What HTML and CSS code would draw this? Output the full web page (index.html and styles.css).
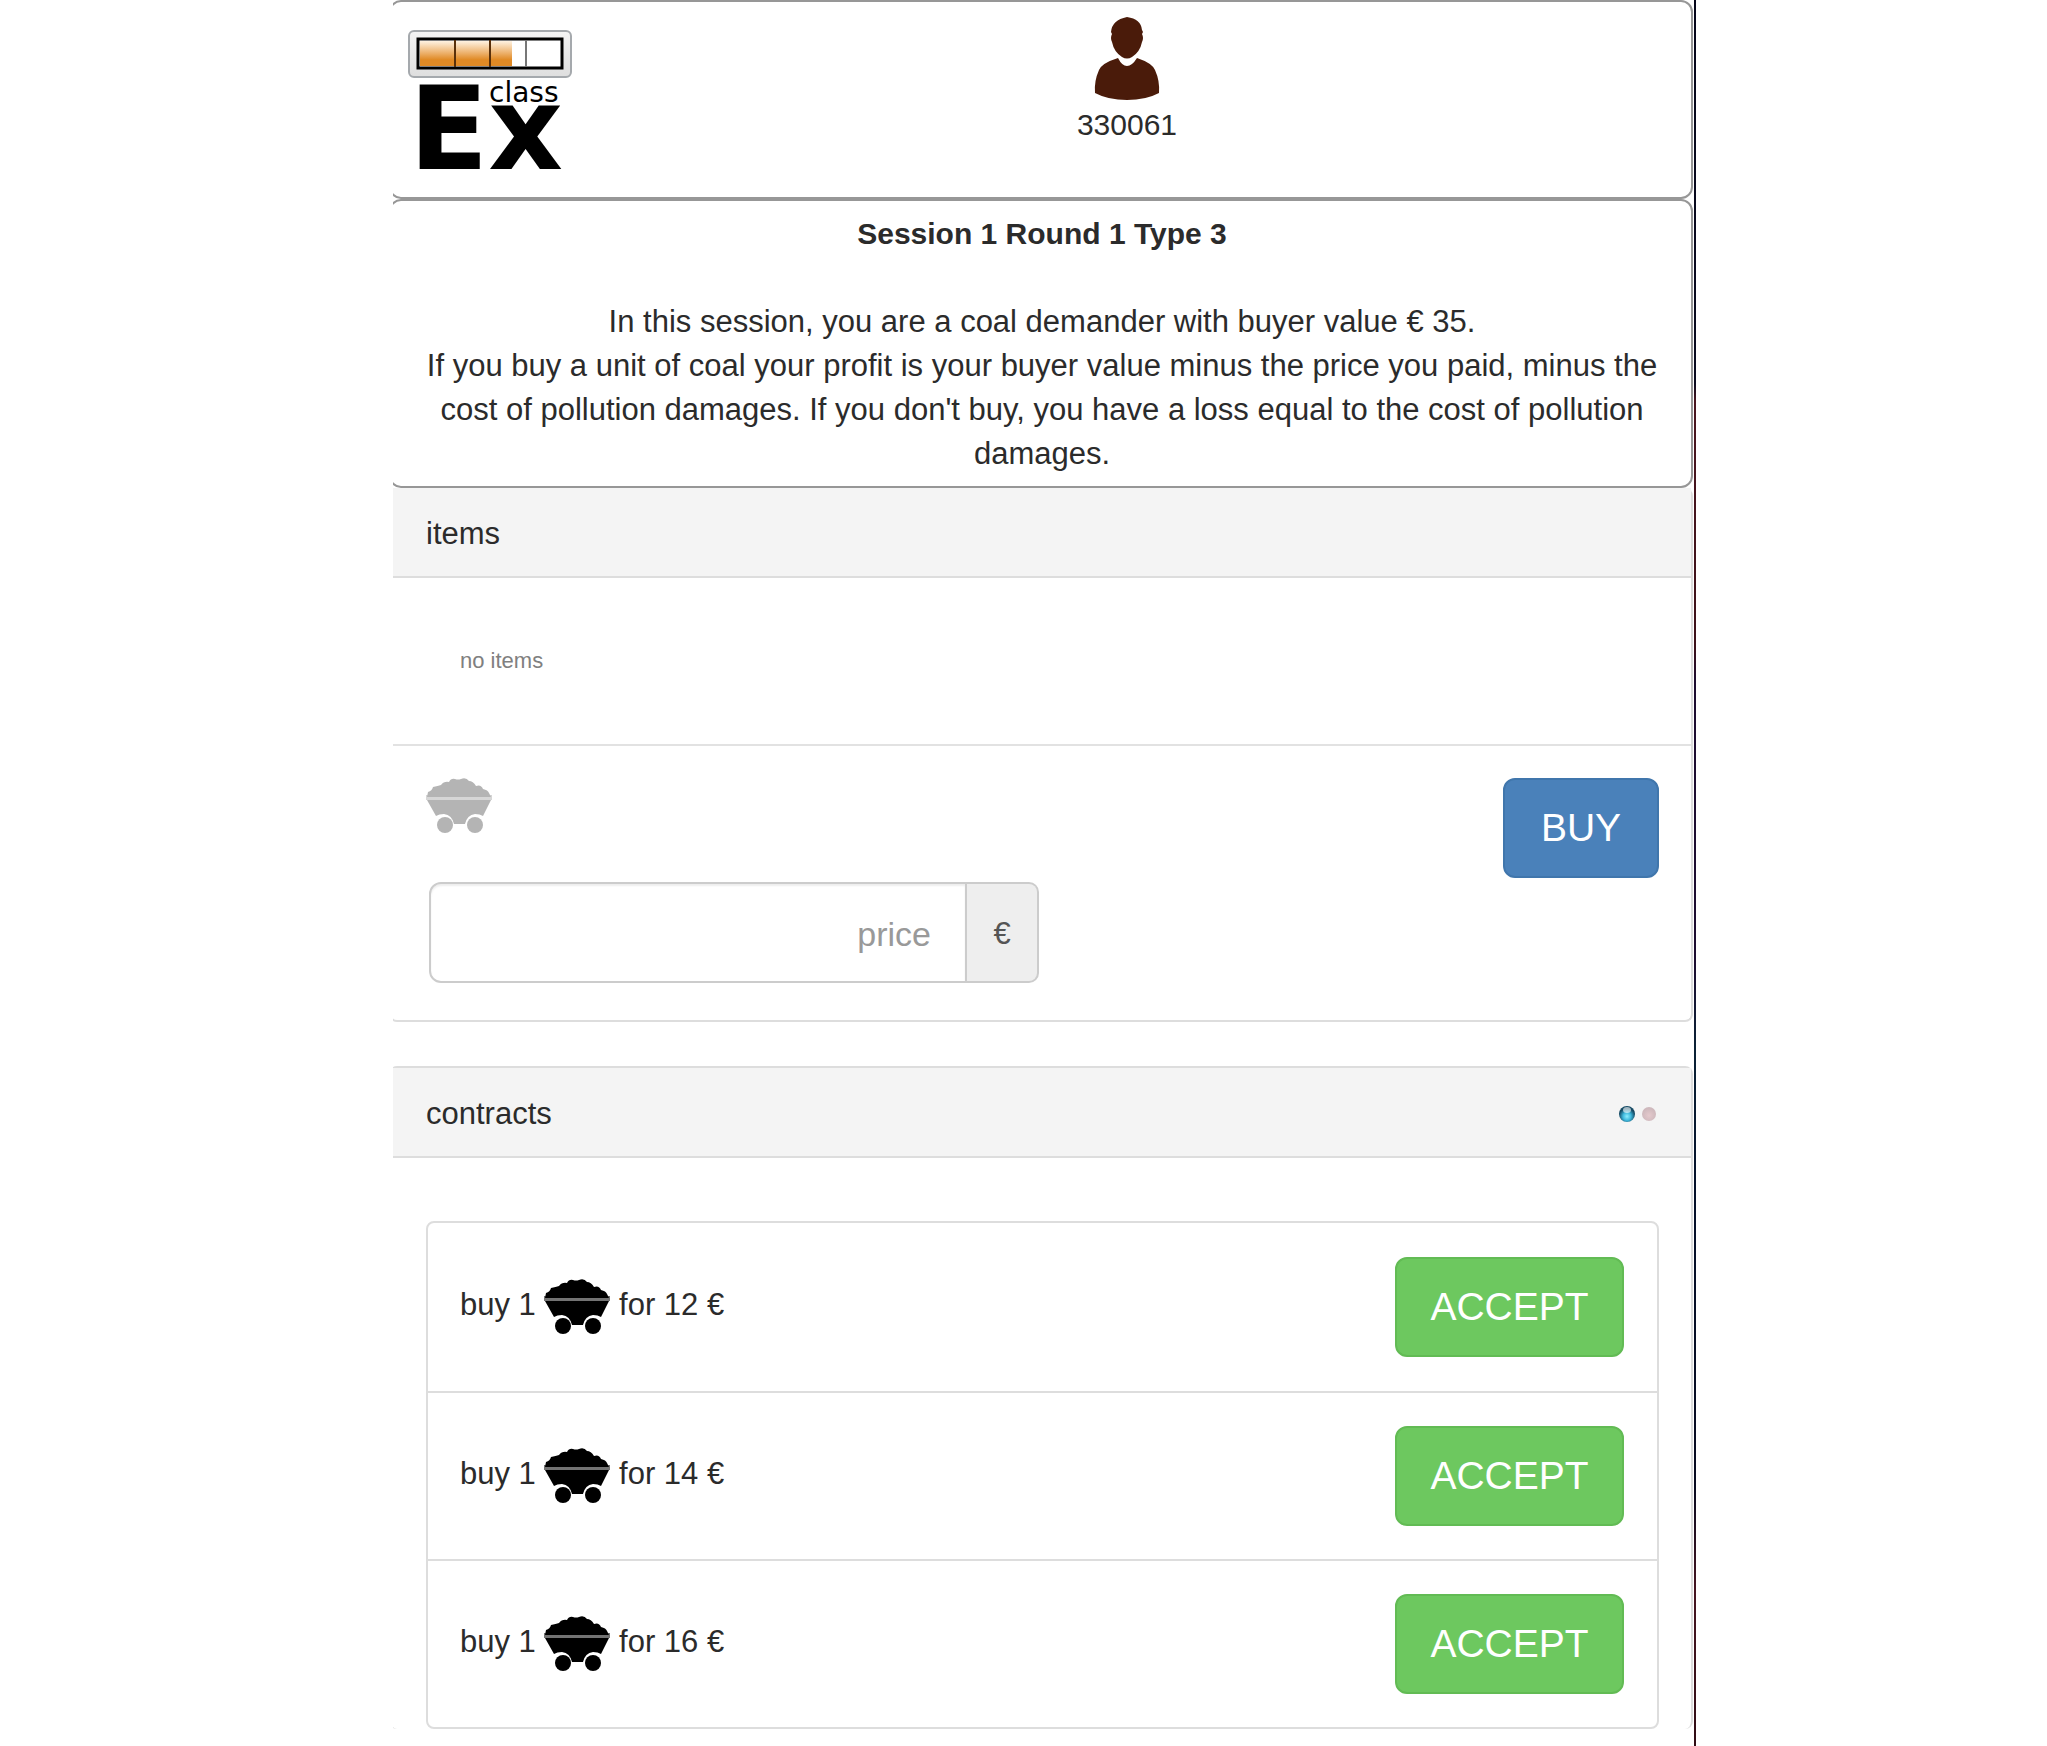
FILE: index.html
```html
<!DOCTYPE html>
<html lang="en">
<head>
<meta charset="utf-8">
<meta name="viewport" content="width=device-width, initial-scale=1">
<title>classEx</title>
<link rel="stylesheet" href="styles.css">
</head>
<body>
<svg class="defs" aria-hidden="true">
  <symbol id="cart" viewBox="0 0 66 56">
    <path d="M1 19 2 14Q6 13 7 9Q12 8 15 7Q18 3 23 4Q25 0 29 1Q32 2 35 1Q40-1 43 3Q47 3 50 8Q55 6 57 11Q62 12 63 15L65 19Z"/>
    <path d="M0 17H66V22H0Z" opacity=".55"/>
    <path d="M1 22H65L57 38Q54 36 49 36Q41 37 39 46H28Q26 37 18 36Q13 36 10 38Z"/>
    <circle cx="19" cy="47" r="8"/><circle cx="49" cy="47" r="8"/>
  </symbol>
</svg>
<main class="app">
  <header class="box top">
    <svg class="logo" viewBox="0 0 166 166" role="img" aria-label="classEx">
      <defs>
        <linearGradient id="frame" x2="0" y2="1"><stop offset="0" stop-color="#f4f4f4"/><stop offset="1" stop-color="#dedede"/></linearGradient>
        <linearGradient id="charge" x2="0" y2="1"><stop offset="0" stop-color="#fff3e2"/><stop offset=".5" stop-color="#ecae66"/><stop offset=".75" stop-color="#e08a25"/><stop offset="1" stop-color="#e08a25"/></linearGradient>
      </defs>
      <rect x="1" y="1" width="162" height="46" rx="5" fill="url(#frame)" stroke="#a5a9ad" stroke-width="2"/>
      <rect x="10" y="9" width="144" height="29" fill="#fff" stroke="#000" stroke-width="3"/>
      <path d="M12 11H104V36H12Z" fill="url(#charge)"/>
      <path d="M47 10V37M82 10V37" stroke="#59300a" stroke-width="2"/>
      <path d="M118 10V37" stroke="#777" stroke-width="2"/>
      <text class="logo-ex" x="1" y="139">Ex</text>
      <text class="logo-class" x="81" y="72">class</text>
    </svg>
    <div class="user">
      <svg class="avatar" viewBox="0 0 66 84" aria-hidden="true">
        <path fill="#4a1b0a" d="M33 0Q47 2 48 13L49 15 48 17Q50 21 48 25Q46 35 38 40Q33 43 28 40Q20 35 18 25Q16 21 18 17L17 15Q18 3 33 0ZM24 41Q28 49 33 49Q38 49 43 41Q58 46 61 53Q66 64 65 76Q52 83 33 83Q14 83 1 76Q0 64 5 53Q8 46 24 41Z"/>
      </svg>
      <div>330061</div>
    </div>
  </header>
  <section class="box intro">
    <h1>Session 1 Round 1 Type 3</h1>
    <p>In this session, you are a coal demander with buyer value € 35.<br>If you buy a unit of coal your profit is your buyer value minus the price you paid, minus the cost of pollution damages. If you don't buy, you have a loss equal to the cost of pollution damages.</p>
  </section>
  <section class="panel">
    <h2 class="heading">items</h2>
    <p class="empty">no items</p>
    <form class="offer">
      <div>
        <svg class="cart cart-muted" aria-hidden="true"><use href="#cart"/></svg>
        <div class="price-group">
          <input class="price" type="text" placeholder="price" aria-label="price">
          <span class="unit">€</span>
        </div>
      </div>
      <button class="btn buy" type="button">BUY</button>
    </form>
  </section>
  <section class="panel contracts">
    <h2 class="heading">contracts
      <svg class="lights" viewBox="0 0 38 16" aria-hidden="true">
        <defs>
          <radialGradient id="on" cy=".65"><stop offset="0" stop-color="#8deeff"/><stop offset=".5" stop-color="#3fb8dc"/><stop offset="1" stop-color="#154a64"/></radialGradient>
          <radialGradient id="off" cy=".6"><stop offset="0" stop-color="#e4c9cc"/><stop offset="1" stop-color="#cfb9bd"/></radialGradient>
        </defs>
        <circle cx="8" cy="8" r="8" fill="url(#on)"/><ellipse cx="8" cy="4" rx="4" ry="3" fill="#fff" opacity=".6"/>
        <circle cx="30" cy="8" r="7" fill="url(#off)"/>
      </svg>
    </h2>
    <ul class="list">
      <li><span class="deal">buy 1 <svg class="cart" role="img" aria-label="coal"><use href="#cart"/></svg> for 12 €</span><button class="btn accept" type="button">ACCEPT</button></li>
      <li><span class="deal">buy 1 <svg class="cart" role="img" aria-label="coal"><use href="#cart"/></svg> for 14 €</span><button class="btn accept" type="button">ACCEPT</button></li>
      <li><span class="deal">buy 1 <svg class="cart" role="img" aria-label="coal"><use href="#cart"/></svg> for 16 €</span><button class="btn accept" type="button">ACCEPT</button></li>
    </ul>
  </section>
</main>
</body>
</html>
```
FILE: styles.css
```css
* { box-sizing: border-box; }

body {
  margin: 0;
  display: grid;
  grid-template-columns: 393fr 1303fr 351fr;
  min-height: 100vh;
  background: #fff;
  color: #2b2b2b;
  font: 31px/44px "Liberation Sans", Arial, sans-serif;
}

h1, h2, p, ul { margin: 0; padding: 0; font: inherit; }
.defs { position: absolute; width: 0; height: 0; }

.app {
  grid-column: 2;
  min-width: 0;
  overflow: hidden;
  border-right: 2px solid;
  border-image: linear-gradient(#05061a 0%, #0a0b20 22%, #4a1620 23%, #3c1018 37%, #1c0c30 39%, #1c0c30 55%, #0b2236 60%, #04102a 68%, #070a20 85%, #451420 91%, #300c14 100%) 1;
}

/* The boxes run past the left edge, which cuts off their rounded side. */
.box, .panel { margin-left: -4px; margin-right: 1px; }
.box { border: 2px solid #979797; border-radius: 12px; }

.top {
  display: grid;
  grid-template-columns: 172px 1fr;
  height: 199px;
}
.logo { width: 166px; height: 166px; margin: 28px 0 0 17px; overflow: visible; }
.logo-ex { font: bold 116px "DejaVu Sans", sans-serif; fill: #000; }
.logo-class { font: 28px "DejaVu Sans", sans-serif; fill: #000; }
.user { padding-top: 15px; text-align: center; font-size: 30px; }
.avatar { display: block; width: 66px; height: 84px; margin: 0 auto 2px; }

.intro { padding: 11px 30px 10px 32px; text-align: center; }
.intro h1 { margin-bottom: 44px; font-weight: bold; font-size: 30px; }

.panel { border: 2px solid #ddd; border-radius: 8px; border-top: 0; }
.contracts { margin-top: 44px; border-top: 2px solid #ddd; border-bottom: 0; }
.heading {
  display: flex;
  align-items: center;
  justify-content: space-between;
  height: 90px;
  padding: 4px 34px 0 35px;
  background: #f4f4f4;
  border-bottom: 2px solid #ddd;
}
.lights { width: 38px; height: 16px; }
.empty {
  padding: 61px 69px;
  border-bottom: 2px solid #e2e2e2;
  color: #808080;
  font-size: 22px;
}
.offer {
  display: flex;
  justify-content: space-between;
  align-items: flex-start;
  padding: 32px 32px 37px 35px;
}
.cart { width: 66px; height: 56px; fill: #000; vertical-align: middle; }
.cart-muted { display: block; fill: #b4b4b4; }
.price-group { display: flex; width: 610px; height: 101px; margin: 48px 0 0 3px; }
.price {
  flex: 1;
  min-width: 0;
  padding: 4px 34px 0;
  border: 2px solid #ccc;
  border-radius: 12px 0 0 12px;
  box-shadow: inset 0 2px 2px #eee;
  text-align: right;
  font: 34px "Liberation Sans", Arial, sans-serif;
}
.price::placeholder { color: #999; opacity: 1; }
.unit {
  display: grid;
  place-items: center;
  width: 72px;
  padding-top: 2px;
  border: 2px solid #ccc;
  border-left: 0;
  border-radius: 0 10px 10px 0;
  background: #eee;
  color: #555;
}
.btn {
  height: 100px;
  border: 2px solid;
  border-radius: 12px;
  color: #fff;
  font: 39px "Liberation Sans", Arial, sans-serif;
}
.buy { width: 156px; background: #4a81ba; border-color: #4076ac; }
.accept { width: 229px; background: #6dc85f; border-color: #62bb54; }

.list {
  margin: 63px 32px 18px 35px;
  border: 2px solid #ddd;
  border-radius: 8px;
  list-style: none;
}
.list li {
  display: flex;
  justify-content: space-between;
  align-items: center;
  height: 168px;
  padding: 0 33px 0 32px;
}
.list li + li { border-top: 2px solid #ddd; }
```
